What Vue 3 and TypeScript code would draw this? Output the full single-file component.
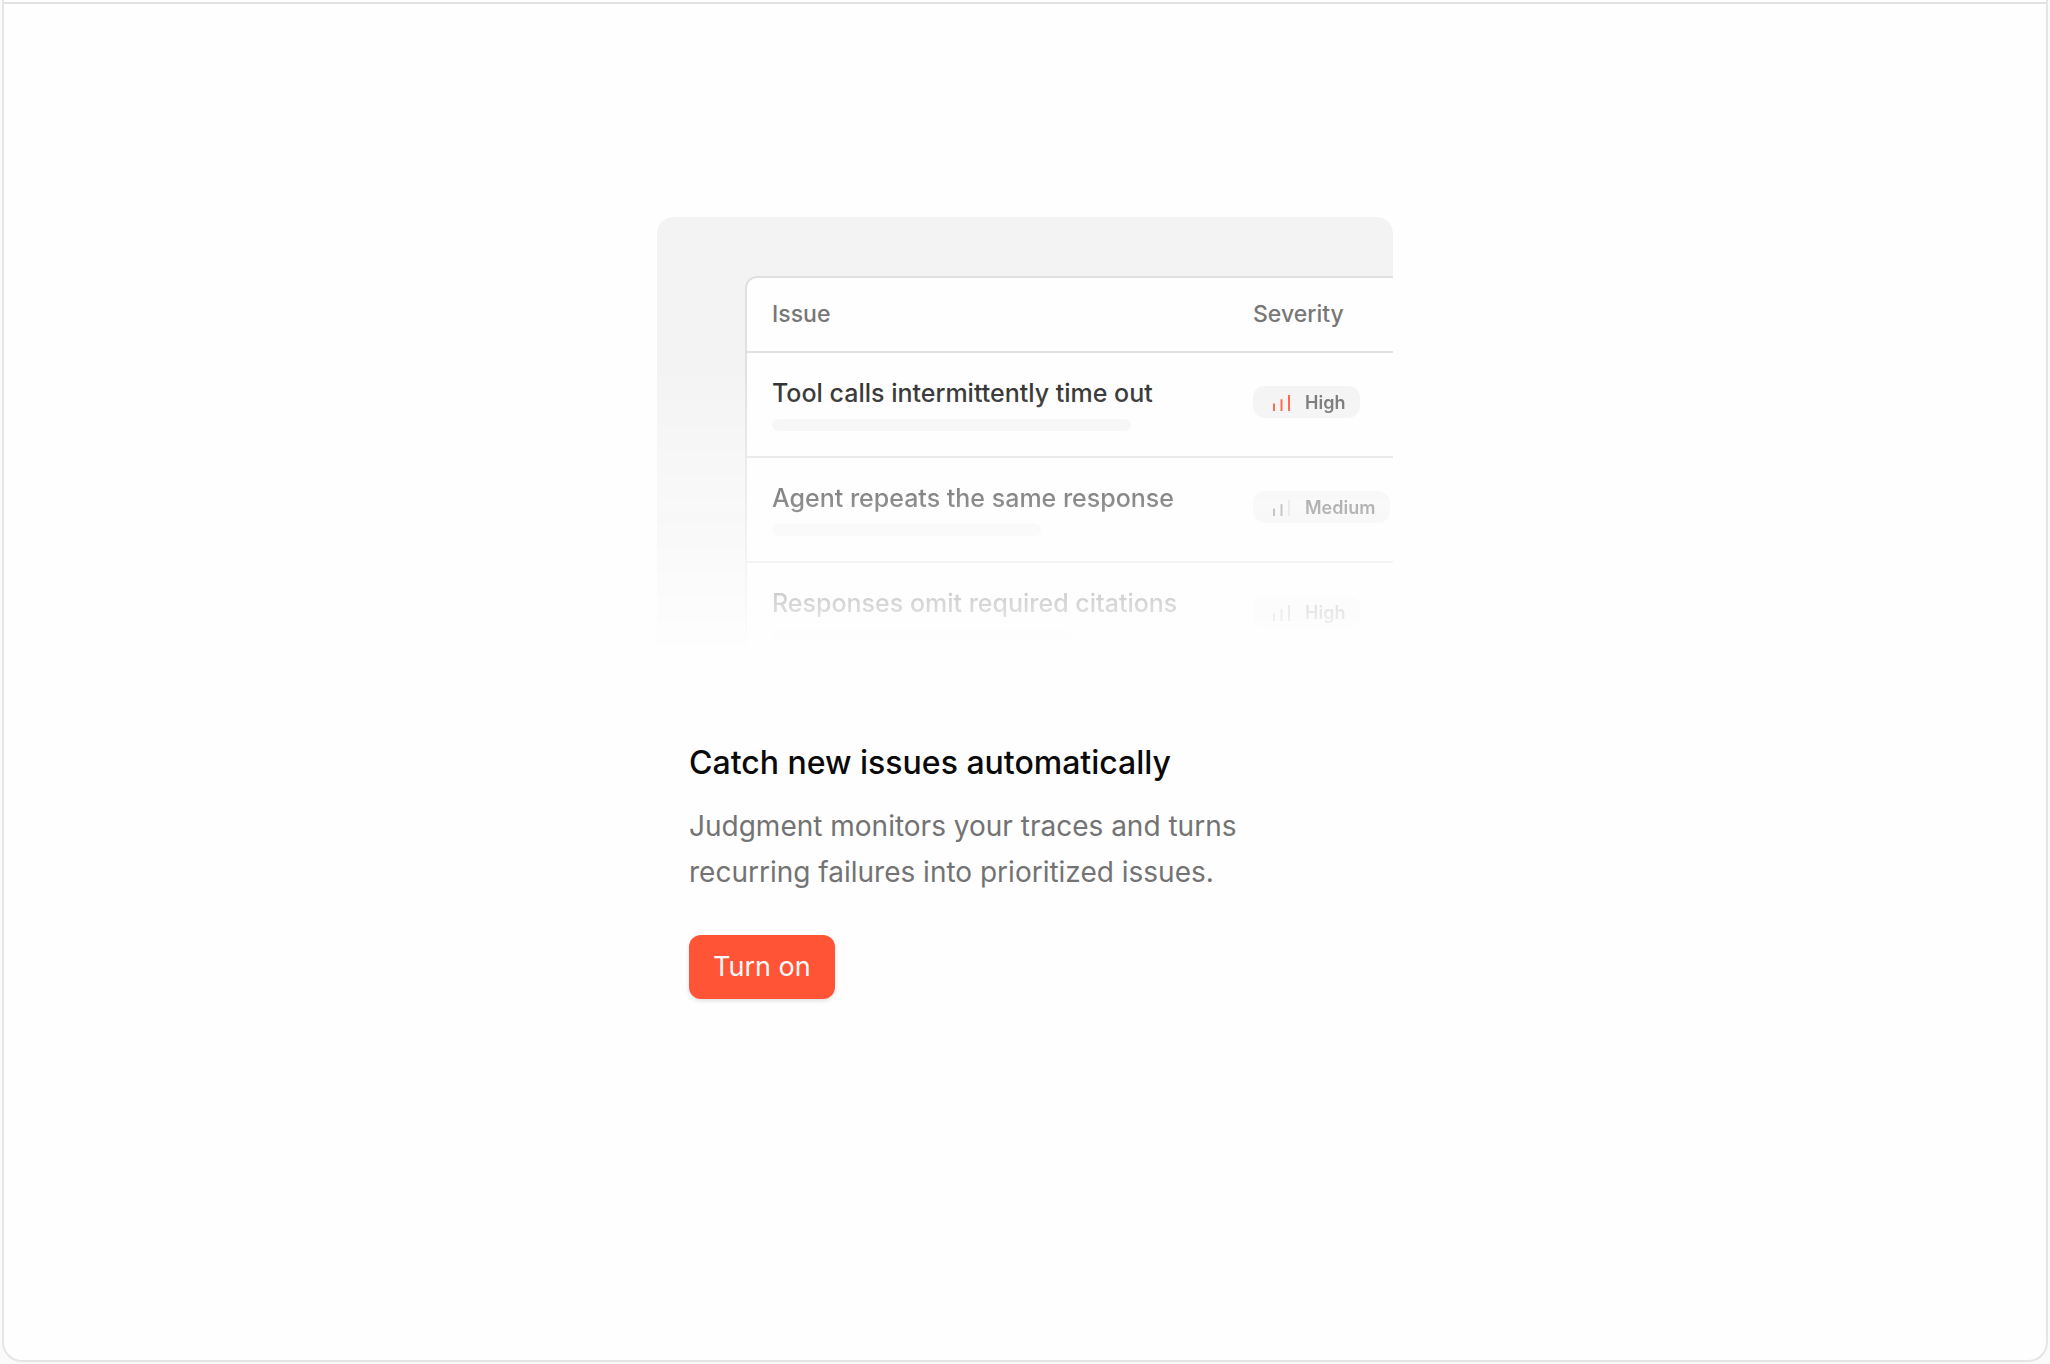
<script setup lang="ts">
interface Issue {
  title: string
  barWidth: number
  severity: 'High' | 'Medium'
  tone: 'alert' | 'muted'
}

const issues: Issue[] = [
  { title: 'Tool calls intermittently time out', barWidth: 359, severity: 'High', tone: 'alert' },
  { title: 'Agent repeats the same response', barWidth: 269, severity: 'Medium', tone: 'muted' },
  { title: 'Responses omit required citations', barWidth: 299, severity: 'High', tone: 'muted' },
]
</script>

<template>
  <div class="page">
    <main class="frame">
      <div class="topline"></div>
      <section class="empty">
        <div class="preview">
          <div class="panel">
            <table class="issues">
              <thead>
                <tr>
                  <th scope="col" class="col-issue">Issue</th>
                  <th scope="col">Severity</th>
                </tr>
              </thead>
              <tbody>
                <tr v-for="issue in issues" :key="issue.title">
                  <td class="col-issue">
                    <div class="title">{{ issue.title }}</div>
                    <div class="bar" :style="{ width: issue.barWidth + 'px' }"></div>
                  </td>
                  <td class="col-severity">
                    <span class="badge">
                      <svg :class="['signal', issue.tone]" viewBox="0 0 24 24" aria-hidden="true">
                        <path d="M5 13.5v7.5" />
                        <path d="M12.5 9.2v11.8" />
                        <path :class="{ faint: issue.severity === 'Medium' }" d="M20 5v16" />
                      </svg>
                      {{ issue.severity }}
                    </span>
                  </td>
                </tr>
              </tbody>
            </table>
          </div>
        </div>
        <div class="copy">
          <h2>Catch new issues automatically</h2>
          <p>Judgment monitors your traces and turns recurring failures into prioritized issues.</p>
          <button type="button">Turn on</button>
        </div>
      </section>
    </main>
  </div>
</template>

<style>
body {
  background: #fafafa;
}
</style>

<style scoped>
.page {
  box-sizing: border-box;
  display: flex;
  min-height: 100vh;
  padding: 0 2px 2px;
  font-family: Inter, "Liberation Sans", sans-serif;
}

.frame {
  flex: 1;
  min-width: 0;
  border: 2px solid #e5e5e5;
  border-top: 0;
  border-radius: 0 0 20px 20px;
  background: #fefefe;
}

.topline {
  height: 2px;
  border-bottom: 2px solid #e2e2e2;
}

.empty {
  max-width: 736px;
  margin: 0 auto;
  padding: 213px 0 64px;
}

.preview {
  box-sizing: border-box;
  height: 440px;
  padding: 59px 0 0 88px;
  overflow: hidden;
  border-radius: 16px;
  background: #f3f3f3;
  mask-image: linear-gradient(to bottom, #000 148px, transparent 440px);
}

.panel {
  width: 900px;
  height: 480px;
  border: 2px solid #e0e0e0;
  border-radius: 12px 0 0 0;
  background: #fefefe;
}

.issues {
  width: 100%;
  border-spacing: 0;
  table-layout: fixed;
}

th,
td {
  box-sizing: border-box;
  border-bottom: 2px solid #e0e0e0;
  text-align: left;
}

th {
  height: 75px;
  padding: 0 25px 2px;
  color: #777;
  font-size: 23px;
  font-weight: 500;
  line-height: 32px;
}

.col-issue {
  width: 481px;
}

td {
  height: 105px;
  padding: 24px 25px 0;
  vertical-align: top;
}

.title {
  color: #262626;
  font-size: 25px;
  font-weight: 500;
  line-height: 32px;
}

.bar {
  height: 12px;
  margin-top: 10px;
  border-radius: 6px;
  background: #f5f5f5;
}

.col-severity {
  padding-top: 33px;
}

.badge {
  display: inline-flex;
  align-items: center;
  gap: 12px;
  height: 32px;
  padding: 0 15px 0 16px;
  border-radius: 12px;
  background: #f3f3f3;
  color: #6b6b6b;
  font-size: 18px;
  font-weight: 600;
}

.signal {
  width: 24px;
  height: 24px;
  fill: none;
  stroke-width: 2;
}

.alert {
  stroke: #ff5436;
}

.muted {
  stroke: #8c8c8c;
}

.faint {
  opacity: 0.25;
}

.copy {
  padding: 84px 32px 0;
}

h2 {
  margin: 0;
  color: #0a0a0a;
  font-size: 32px;
  font-weight: 500;
  line-height: 44px;
}

p {
  max-width: 576px;
  margin: 18px 0 40px;
  color: #737373;
  font-size: 28px;
  line-height: 46px;
}

button {
  height: 64px;
  padding: 0 24px;
  border: 0;
  border-radius: 12px;
  background: #ff5436;
  box-shadow: 0 2px 4px rgb(0 0 0 / 12%);
  color: #fafafa;
  font: 400 27px/40px Inter, "Liberation Sans", sans-serif;
}
</style>
